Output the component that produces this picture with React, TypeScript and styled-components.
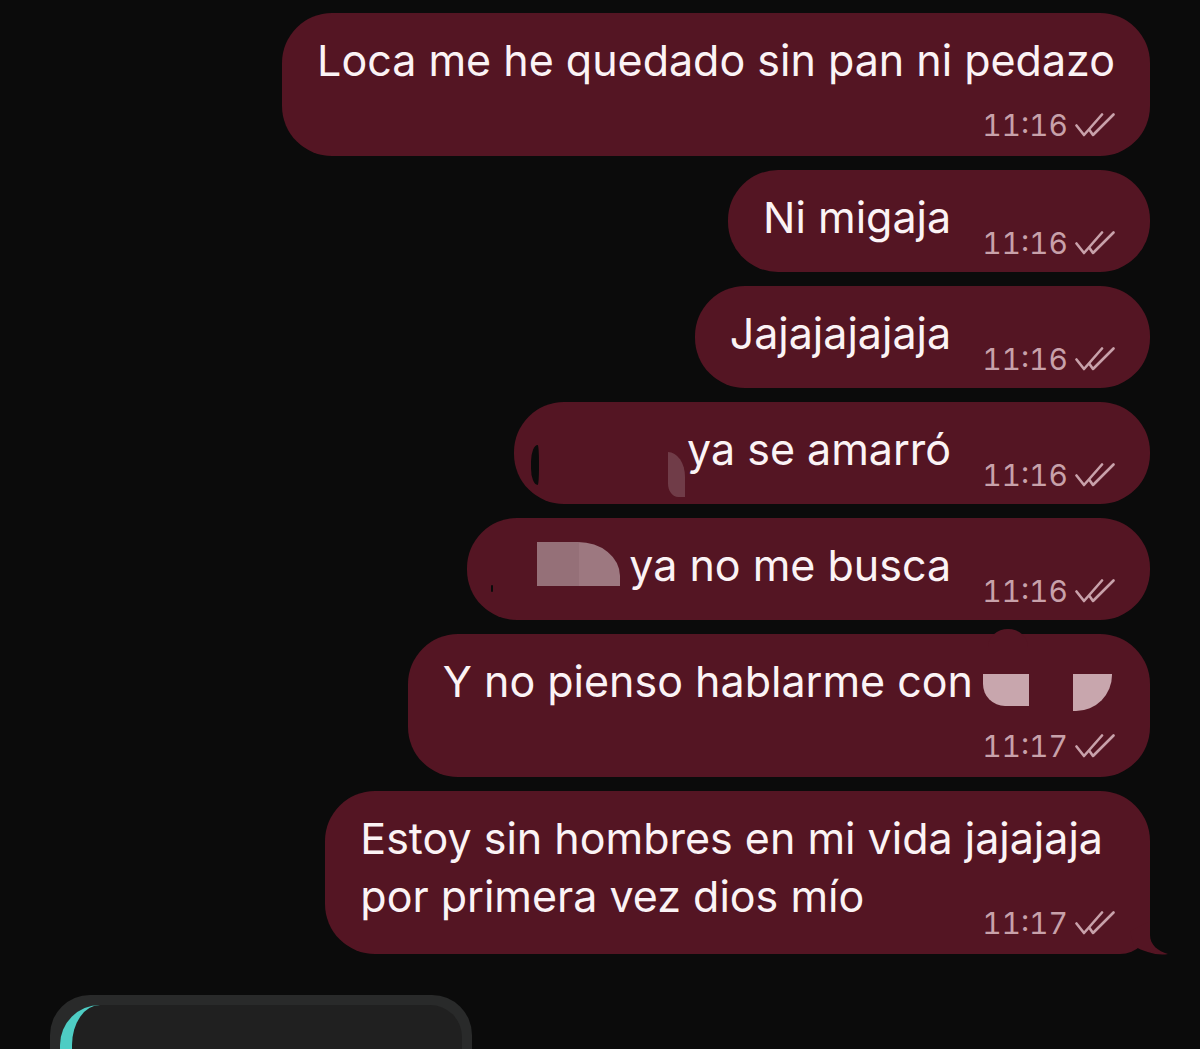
import React from "react";
import styled, { createGlobalStyle } from "styled-components";

const GlobalStyle = createGlobalStyle`
  html, body {
    margin: 0;
    height: 100%;
    overflow: hidden;
    background: #0b0b0b;
  }
  body {
    font-family: Inter, "Liberation Sans", Arial, sans-serif;
    -webkit-font-smoothing: antialiased;
  }
`;

const BUBBLE = "#541523";
const META = "#c8a1aa";

const Thread = styled.div`
  display: flex;
  flex-direction: column;
  align-items: flex-end;
  gap: 14px;
  padding: 13px 50px 0;
`;

const Bubble = styled.div<{ $stacked?: boolean; $tail?: boolean }>`
  position: relative;
  display: flex;
  flex-direction: ${(p) => (p.$stacked ? "column" : "row")};
  align-items: flex-end;
  gap: ${(p) => (p.$stacked ? "18px" : "31px")};
  padding: 18px 35px ${(p) => (p.$stacked ? "13px" : "11px")};
  background: ${BUBBLE};
  border-radius: 50px;
  border-bottom-right-radius: ${(p) => (p.$tail ? "30px" : "50px")};
  color: #fbf3f5;
`;

const Text = styled.div<{ $stacked?: boolean; $trail?: number }>`
  align-self: ${(p) => (p.$stacked ? "stretch" : "auto")};
  margin-bottom: ${(p) => (p.$stacked ? "0" : "15px")};
  margin-right: ${(p) => p.$trail ?? 0}px;
  font-size: 43px;
  line-height: 58px;
  white-space: pre;
`;

const MetaRow = styled.div<{ $pull?: number }>`
  display: flex;
  align-items: center;
  gap: 7px;
  margin-top: ${(p) => -(p.$pull ?? 0)}px;
  color: ${META};
  font-size: 30px;
  line-height: 36px;
  font-variant-numeric: tabular-nums;
`;

const Tail = styled.svg`
  position: absolute;
  right: -20px;
  bottom: -1px;
`;

const Redact = styled.span<{ $w: number }>`
  position: relative;
  display: inline-block;
  width: ${(p) => p.$w}px;
  height: 58px;
  vertical-align: top;
`;

const Patch = styled.span<{ $x: number; $y: number; $w: number; $h: number; $bg: string; $r: string }>`
  position: absolute;
  left: ${(p) => p.$x}px;
  top: ${(p) => p.$y}px;
  width: ${(p) => p.$w}px;
  height: ${(p) => p.$h}px;
  background: ${(p) => p.$bg};
  border-radius: ${(p) => p.$r};
`;

const Incoming = styled.div`
  align-self: flex-start;
  margin-top: 27px;
  width: 422px;
  height: 120px;
  box-sizing: border-box;
  padding: 10px 10px 0;
  background: #292a2a;
  border-radius: 40px;
`;

const Quote = styled.div`
  height: 100%;
  background: #202020;
  border-left: 12px solid #4ecdc4;
  border-radius: 40px 32px 0 0;
`;

const Ticks = () => (
  <svg width="40" height="24" viewBox="0 0 40 24" fill="none" stroke={META} strokeWidth="2.6" strokeLinecap="round" strokeLinejoin="round">
    <path d="M1.5 12.5 L9 22 L27 1.5" />
    <path d="M14.5 17 L18 22 L38.5 1.5" />
  </svg>
);

const Meta = ({ time, pull }: { time: string; pull?: number }) => (
  <MetaRow $pull={pull}>
    <span>{time}</span>
    <Ticks />
  </MetaRow>
);

export default function App() {
  return (
    <>
      <GlobalStyle />
      <Thread>
        <Bubble $stacked>
          <Text $stacked>Loca me he quedado sin pan ni pedazo</Text>
          <Meta time="11:16" />
        </Bubble>

        <Bubble>
          <Text>Ni migaja</Text>
          <Meta time="11:16" />
        </Bubble>

        <Bubble>
          <Text>Jajajajajaja</Text>
          <Meta time="11:16" />
        </Bubble>

        <Bubble>
          <Text>
            <Redact $w={138}>
              <Patch $x={-18} $y={25} $w={8} $h={40} $bg="#0b0b0b" $r="100% 20% 20% 100% / 50% 50% 50% 50%" />
              <Patch $x={119} $y={32} $w={17} $h={45} $bg="rgba(255,255,255,0.17)" $r="0 100% 0 60% / 0 55% 0 30%" />
            </Redact>
            ya se amarró
          </Text>
          <Meta time="11:16" />
        </Bubble>

        <Bubble>
          <Text>
            <Redact $w={127}>
              <Patch $x={-11} $y={49} $w={2} $h={7} $bg="#0b0b0b" $r="1px" />
              <Patch
                $x={35}
                $y={6}
                $w={83}
                $h={44}
                $bg="linear-gradient(90deg, #957078 0 50%, #9d7880 50% 100%)"
                $r="0 42px 0 0 / 0 34px 0 0"
              />
            </Redact>
            ya no me busca
          </Text>
          <Meta time="11:16" />
        </Bubble>

        <Bubble $stacked>
          <Text $stacked>
            Y no pienso hablarme con
            <Redact $w={142}>
              <Patch $x={15} $y={-23} $w={40} $h={18} $bg={BUBBLE} $r="50% 50% 0 0 / 100% 100% 0 0" />
              <Patch $x={10} $y={22} $w={46} $h={32} $bg="#c8a6ad" $r="0 0 0 22px" />
              <Patch $x={100} $y={22} $w={39} $h={37} $bg="#c8a6ad" $r="0 0 36px 0 / 0 0 36px 0" />
            </Redact>
          </Text>
          <Meta time="11:17" />
        </Bubble>

        <Bubble $stacked $tail>
          <Text $stacked $trail={12}>
            Estoy sin hombres en mi vida jajajaja{"\n"}por primera vez dios mío
          </Text>
          <Meta time="11:17" pull={38} />
          <Tail width="60" height="34" viewBox="0 0 60 34">
            <path d="M40 0 L40 14 C40 24 48 30 58 33 C48 35 34 31 24 25 L20 10 Z" fill={BUBBLE} />
          </Tail>
        </Bubble>

        <Incoming>
          <Quote />
        </Incoming>
      </Thread>
    </>
  );
}
